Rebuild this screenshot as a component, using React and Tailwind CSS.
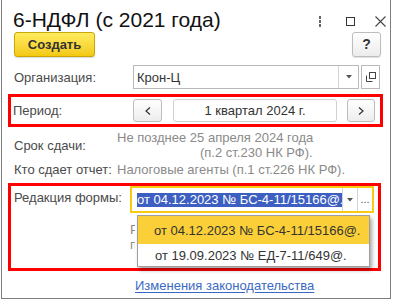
import React from 'react';

function Chevron({ dir }) {
  return (
    <svg width="6" height="8" viewBox="0 0 6 8" className="block">
      {dir === 'left' ? (
        <path d="M5 0.5 L1 4 L5 7.5" fill="none" stroke="#333" strokeWidth="1.2" />
      ) : (
        <path d="M1 0.5 L5 4 L1 7.5" fill="none" stroke="#333" strokeWidth="1.2" />
      )}
    </svg>
  );
}

function DropArrow() {
  return (
    <svg width="6" height="4" viewBox="0 0 6 4" className="block">
      <path d="M0 0 L6 0 L3 3.5 Z" fill="#555" />
    </svg>
  );
}

export default function App() {
  return (
    <div className="w-[393px] h-[300px] bg-white" style={{ fontFamily: '"Liberation Sans", Arial, sans-serif' }}>
      <div className="ml-px w-[390px] h-[299px] border-x border-b border-[#7d7d7d] bg-white text-[13px] leading-[15px]">
        {/* Title bar */}
        <div className="flex h-[32px] items-start">
          <div className="ml-[11px] pt-[9px] text-[21px] leading-[21px] text-[#111]">6-НДФЛ (с 2021 года)</div>
          <div className="ml-auto flex items-center pt-[16px] pr-[4px]">
            <div className="flex flex-col gap-[1.5px]">
              <span className="block w-[2.5px] h-[2.5px] bg-[#666]" />
              <span className="block w-[2.5px] h-[2.5px] bg-[#666]" />
              <span className="block w-[2.5px] h-[2.5px] bg-[#666]" />
            </div>
            <div className="ml-[25px] w-[9px] h-[9px] border-[1.5px] border-[#333]" />
            <svg width="11" height="11" viewBox="0 0 11 11" className="ml-[20px] block">
              <path d="M0.5 0.5 L10.5 10.5 M10.5 0.5 L0.5 10.5" stroke="#444" strokeWidth="1.1" />
            </svg>
          </div>
        </div>

        {/* Buttons */}
        <div className="flex h-[25px] pr-[9px]">
          <button className="ml-[12px] w-[81px] h-[25px] rounded-[3px] border border-[#c9a707] bg-gradient-to-b from-[#ffec5c] to-[#f3c90c] text-[13px] font-bold text-[#333] shadow-[0_1px_1px_rgba(0,0,0,0.15)]">
            Создать
          </button>
          <button className="ml-auto w-[29px] h-[25px] rounded-[3px] border border-[#bdbdbd] bg-gradient-to-b from-white to-[#ececec] text-[14px] font-bold text-[#333] shadow-[0_1px_1px_rgba(0,0,0,0.12)]">
            ?
          </button>
        </div>

        {/* Организация */}
        <div className="mt-[8px] flex h-[24px] items-center">
          <div className="ml-[12px] w-[119px] text-[#4a4a4a]">Организация:</div>
          <div className="flex h-[24px] w-[226px] items-stretch border border-[#b9b9b9] bg-white">
            <div className="flex-1 pl-[3px] flex items-center text-[#333]">Крон-Ц</div>
            <div className="w-[20px] border-l border-[#d4d4d4] flex items-center justify-center">
              <DropArrow />
            </div>
          </div>
          <div className="ml-[2px] h-[24px] w-[19px] border border-[#b9b9b9] flex items-center justify-center">
            <svg width="10" height="10" viewBox="0 0 10 10" className="block">
              <rect x="3.5" y="0.5" width="6" height="6" fill="none" stroke="#444" strokeWidth="1" />
              <path d="M0.5 3.5 V9.5 H6.5" fill="none" stroke="#444" strokeWidth="1" />
            </svg>
          </div>
        </div>

        {/* Период */}
        <div className="mt-[5px] ml-[6px] flex h-[33px] w-[375px] items-center border-[3px] border-[#ff0000]">
          <div className="ml-[2px] w-[120px] text-[#4a4a4a]">Период:</div>
          <button className="flex h-[23px] w-[29px] items-center justify-center rounded-[3px] border border-[#bdbdbd] bg-gradient-to-b from-white to-[#ededed]">
            <Chevron dir="left" />
          </button>
          <div className="ml-[11px] flex h-[23px] w-[164px] items-center justify-center rounded-[3px] border border-[#d0d0d0] bg-white text-[#333]">
            1 квартал 2024 г.
          </div>
          <button className="ml-[10px] flex h-[23px] w-[28px] items-center justify-center rounded-[3px] border border-[#bdbdbd] bg-gradient-to-b from-white to-[#ededed]">
            <Chevron dir="right" />
          </button>
        </div>

        {/* Срок сдачи */}
        <div className="mt-[3px] flex items-center">
          <div className="ml-[12px] w-[103px] text-[#4a4a4a]">Срок сдачи:</div>
          <div className="text-[#8a8a8a]">
            <div>Не позднее 25 апреля 2024 года</div>
            <div className="pl-[83px]">(п.2 ст.230 НК РФ).</div>
          </div>
        </div>

        {/* Кто сдает отчет */}
        <div className="mt-[2px] flex items-center">
          <div className="ml-[12px] w-[103px] text-[#4a4a4a]">Кто сдает отчет:</div>
          <div className="text-[#8a8a8a]">Налоговые агенты (п.1 ст.226 НК РФ).</div>
        </div>

        {/* Редакция формы */}
        <div className="relative mt-[6px] ml-[6px] h-[88px] w-[373px] border-[3px] border-[#ff0000]">
          <div className="flex">
            <div className="ml-[3px] w-[116px] pt-[4px] text-[#4a4a4a]">Редакция формы:</div>
            <div className="flex h-[27px] w-[244px] items-stretch border-2 border-[#f6cb12] bg-white">
              <div className="flex flex-1 items-center overflow-hidden whitespace-nowrap pl-[5px]">
                <span className="bg-[#3d5fc2] text-white leading-[14px]">от 04.12.2023 № БС-4-11/15166@.</span>
              </div>
              <div className="flex w-[16px] shrink-0 items-center justify-center border-x border-[#d4d4d4]">
                <DropArrow />
              </div>
              <div className="flex w-[14px] shrink-0 items-center justify-center text-[#555] text-[11px]">...</div>
            </div>
          </div>
          <div className="ml-[119px] mt-[9px] w-[5px] overflow-hidden whitespace-nowrap text-[#8a8a8a]">
            <div>Р</div>
            <div>п</div>
          </div>

          {/* Dropdown list */}
          <div className="absolute left-[126px] top-[29px] w-[233px] border border-[#9e9e9e] bg-white shadow-[2px_3px_4px_rgba(0,0,0,0.35)]">
            <div className="flex h-[28px] items-center whitespace-nowrap bg-[#fbcf37] pl-[16px] text-[#333]">от 04.12.2023 № БС-4-11/15166@.</div>
            <div className="flex h-[22px] items-center whitespace-nowrap pl-[17px] text-[#333]">от 19.09.2023 № ЕД-7-11/649@.</div>
          </div>
        </div>

        {/* Link */}
        <div className="mt-[7px] ml-[133px]">
          <span className="text-[#3b69c2] underline underline-offset-2">Изменения законодательства</span>
        </div>
      </div>
    </div>
  );
}
